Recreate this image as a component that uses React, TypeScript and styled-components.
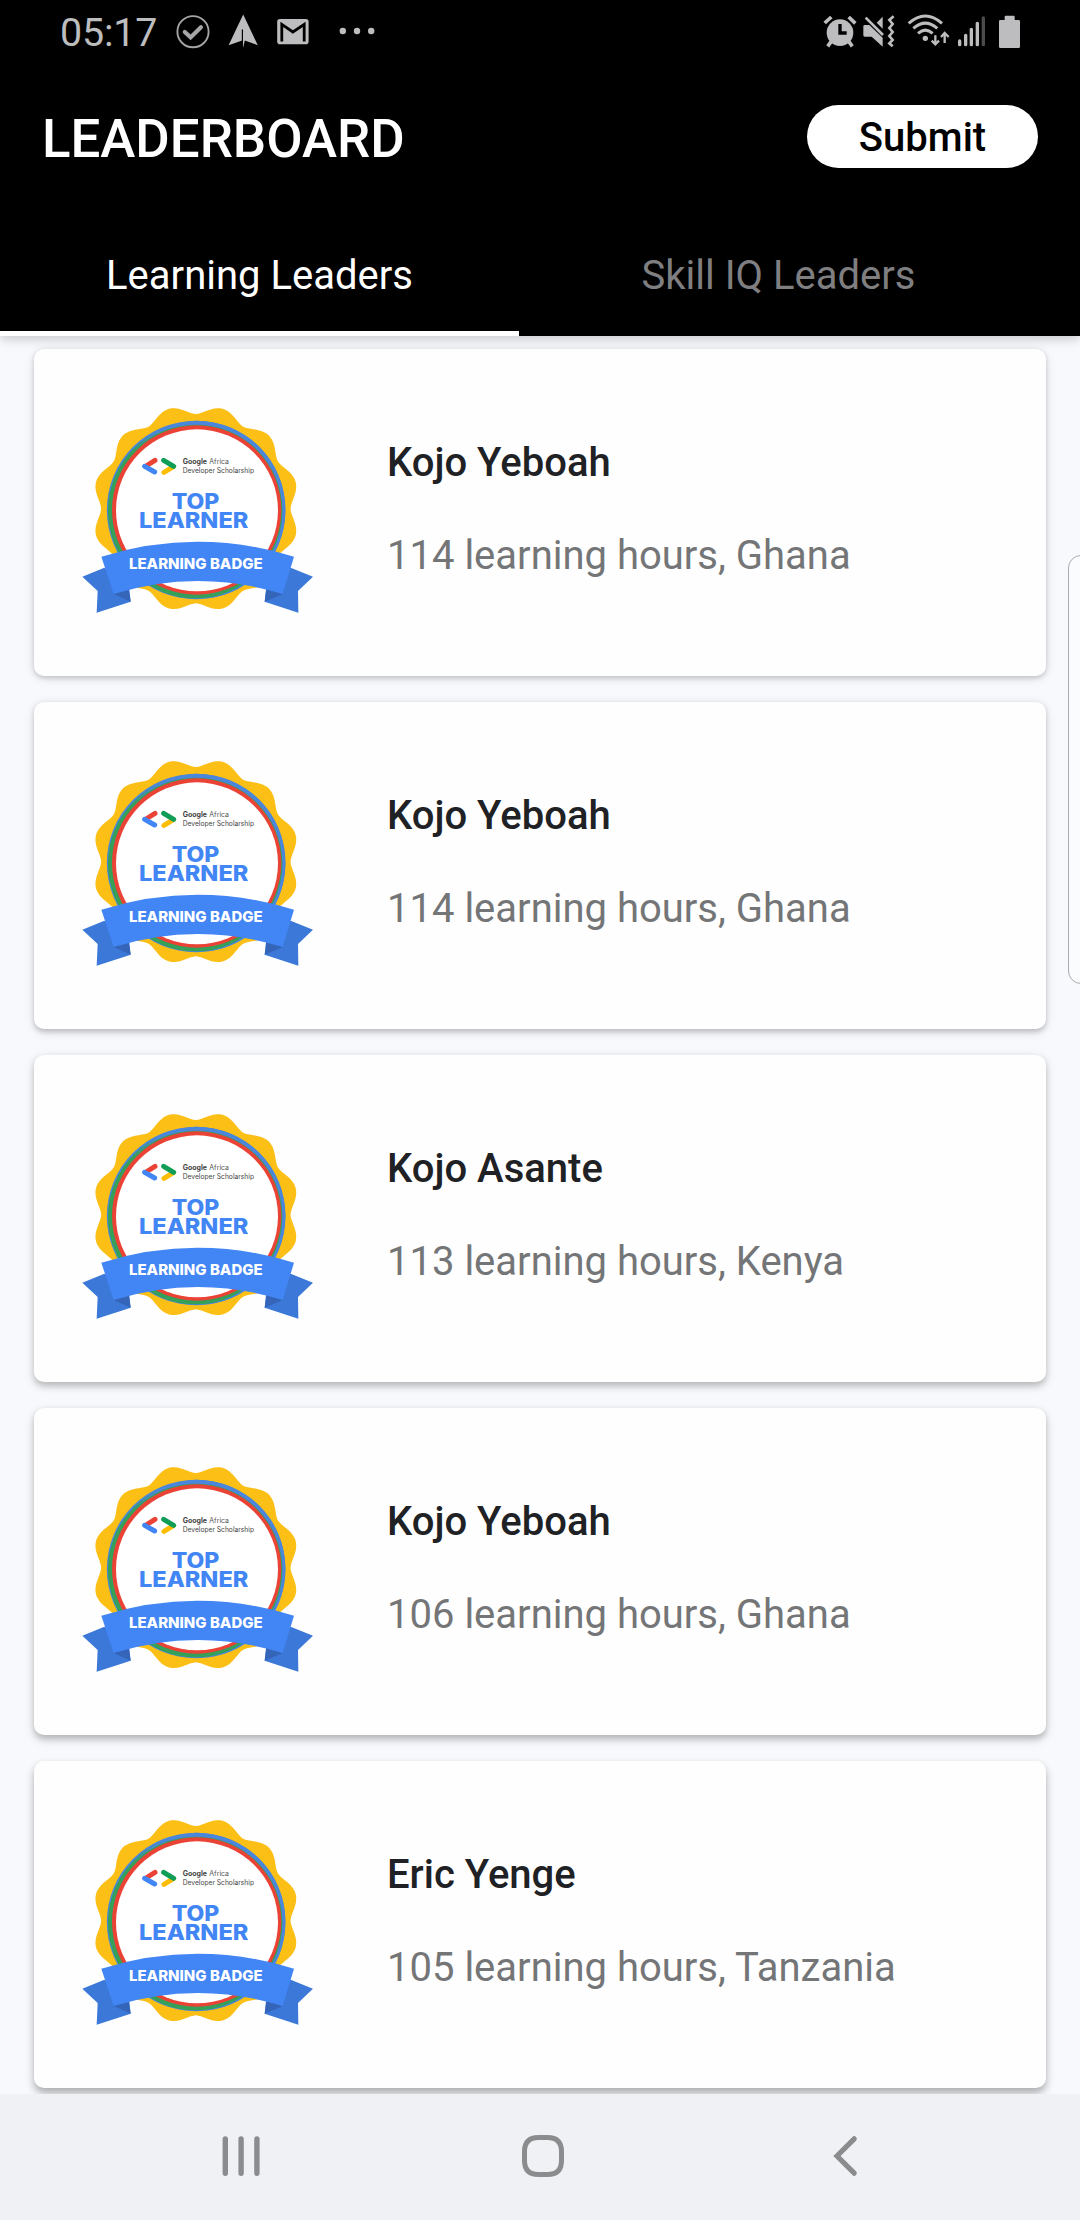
import React from "react";
import styled, { createGlobalStyle } from "styled-components";

const GlobalStyle = createGlobalStyle`
  * { box-sizing: border-box; }
  html, body { margin: 0; padding: 0; background: #f8f9fc; }
  body { font-family: Roboto, "Noto Sans", sans-serif; }
`;

const Screen = styled.div`
  position: relative;
  width: 1080px;
  height: 2220px;
  display: flex;
  flex-direction: column;
  overflow: hidden;
  background: #f8f9fc;
`;

const Header = styled.header`
  flex: none;
  height: 336px;
  background: #000;
  box-shadow: 0 3px 10px rgba(0, 0, 0, 0.16), 0 4px 12px rgba(0, 0, 0, 0.04);
`;

const StatusBar = styled.div`
  height: 63px;
  display: flex;
  justify-content: space-between;
  padding: 0 57px 0 60px;
`;

const StatusGroup = styled.div`
  display: flex;
  align-items: flex-start;
  height: 63px;
`;

const Clock = styled.span`
  width: 115px;
  padding-top: 10px;
  font-size: 39.4px;
  line-height: 46px;
  letter-spacing: -0.2px;
  color: #bdbdbf;
`;

const StatusSvg = styled.svg<{ $gap?: number }>`
  display: block;
  flex: none;
  margin-left: ${(p) => p.$gap ?? 0}px;
`;

const AppBar = styled.div`
  height: 147px;
  display: flex;
  align-items: center;
  justify-content: space-between;
  padding: 0 42px;
`;

const Title = styled.h1`
  margin: 5px 0 0;
  font-size: 52.8px;
  line-height: 62px;
  font-weight: 500;
  color: #fff;
`;

const SubmitButton = styled.button`
  width: 231px;
  height: 63px;
  padding: 3px 0 0;
  border: 0;
  border-radius: 32px;
  background: #fff;
  color: #000;
  font-family: inherit;
  font-size: 40px;
  line-height: 46px;
  font-weight: 500;
`;

const Tabs = styled.nav`
  height: 126px;
  display: flex;
`;

const Tab = styled.div<{ $active?: boolean }>`
  width: 519px;
  display: flex;
  align-items: center;
  justify-content: center;
  padding-top: ${(p) => (p.$active ? 10 : 5)}px;
  border-bottom: ${(p) => (p.$active ? "5px solid #fff" : "0")};
  font-size: 40px;
  line-height: 46px;
  color: ${(p) => (p.$active ? "#fff" : "#7f7f81")};
`;

const List = styled.main`
  flex: 1;
  min-height: 0;
  display: flex;
  flex-direction: column;
  gap: 26px;
  padding: 13px 34px 0;
`;

/* Elevation shadows grow stronger for cards lower on the screen. */
const Card = styled.article<{ $depth: number }>`
  flex: none;
  height: 327px;
  display: flex;
  align-items: flex-start;
  padding: 41px 36px;
  border-radius: 10px;
  background: #fefefe;
  box-shadow:
    0 ${(p) => 2 + p.$depth * 0.6}px ${(p) => 5 + p.$depth * 0.5}px rgba(0, 0, 0, ${(p) => 0.17 + p.$depth * 0.012}),
    0 ${(p) => 2 + p.$depth * 0.8}px 12px rgba(0, 0, 0, 0.1);
`;

const CardText = styled.div`
  margin-left: 57px;
  padding-top: 50px;
  display: flex;
  flex-direction: column;
  gap: 47px;
`;

const Name = styled.h2`
  margin: 0;
  font-size: 40px;
  line-height: 46px;
  font-weight: 500;
  color: #202124;
`;

const Details = styled.p`
  margin: 0;
  font-size: 40px;
  line-height: 46px;
  color: #747577;
`;

const EdgeHandle = styled.div`
  position: absolute;
  top: 555px;
  right: -14px;
  width: 26px;
  height: 429px;
  border: 1px solid #aaabad;
  border-radius: 14px;
  background: #fbfcfd;
`;

const NavBar = styled.footer`
  position: relative;
  flex: none;
  height: 126px;
  display: flex;
  align-items: center;
  padding: 0 210px;
  justify-content: space-between;
  background: #f0f1f4;
`;

const GREY = "#bdbdbf";

function LeftIcons() {
  return (
    <>
      <StatusSvg width="36" height="63" viewBox="175 0 36 63" fill="none">
        <circle cx="193" cy="31.7" r="15.6" stroke="#a5a5a7" strokeWidth="1.9" />
        <path d="M184.8 32l5.8 5.4 10.3-10.2" stroke="#a5a5a7" strokeWidth="4.2" strokeLinecap="round" />
      </StatusSvg>
      <StatusSvg $gap={16} width="34" height="63" viewBox="227 0 34 63" fill={GREY}>
        <path d="M243.2 14.5L257.8 45.2 244.8 40.4 243.2 47.4 242.2 40.4 228.6 45.2z" />
        <path d="M242.4 29.5V45" stroke="#000" strokeWidth="1.2" />
      </StatusSvg>
      <StatusSvg $gap={15} width="34" height="63" viewBox="276 0 34 63">
        <rect x="277.2" y="19" width="31.4" height="25.2" rx="2.8" fill={GREY} />
        <path d="M281.8 41.4V24.4L292.9 32 304.2 24.4V41.4" fill="none" stroke="#000" strokeWidth="2.8" />
      </StatusSvg>
      <StatusSvg $gap={29} width="38" height="63" viewBox="339 0 38 63" fill={GREY}>
        <circle cx="342.8" cy="31" r="3.2" />
        <circle cx="357" cy="31" r="3.2" />
        <circle cx="371.2" cy="31" r="3.2" />
      </StatusSvg>
    </>
  );
}

function RightIcons() {
  return (
    <>
      <StatusSvg width="35" height="63" viewBox="129 0 105 189" fill="none" stroke={GREY}>
        <circle cx="180" cy="98" r="40" fill={GREY} stroke="none" />
        <path d="M134 69L154 51M206 51L226 70" strokeWidth="11" />
        <path d="M154 124L143 139M206 124L217 139" strokeWidth="11" />
        <path d="M180 72V99H200" stroke="#000" strokeWidth="10" />
      </StatusSvg>
      <StatusSvg $gap={5} width="33" height="63" viewBox="249 0 99 189">
        <path d="M250 79q0-4 4-4H268L308 113V140L275 110H254q-4 0-4-4z" fill={GREY} />
        <path d="M290 68L308 50V86z" fill={GREY} />
        <path d="M257 53L309 105" stroke={GREY} strokeWidth="8" />
        <path d="M341 49L328 60 338 72 328 84 338 96 328 108 338 120 328 130 338 139" fill="none" stroke={GREY} strokeWidth="8" />
      </StatusSvg>
      <StatusSvg $gap={10} width="44" height="63" viewBox="378 0 132 189" fill="none" stroke={GREY} strokeWidth="9">
        <path d="M386 70Q436 26 486 70" />
        <path d="M400 85Q436 54 472 85" />
        <path d="M414 100Q436 81 458 100" />
        <circle cx="436" cy="115" r="8" fill={GREY} stroke="none" />
        <path d="M466 106V134M455 122L466 133 477 122" strokeWidth="7" />
        <path d="M494 129V99M483 111L494 99 506 111" strokeWidth="7" />
      </StatusSvg>
      <StatusSvg $gap={7} width="30" height="63" viewBox="531 0 90 189" stroke={GREY} strokeWidth="10" strokeLinecap="round">
        <path d="M539 123V134M557 106V134M574 88V134M592 70V134" />
        <path d="M610 54V134" stroke="#4b4b4c" />
      </StatusSvg>
      <StatusSvg $gap={12} width="24" height="63" viewBox="657 0 72 189" fill={GREY}>
        <path d="M674 60V50q0-3 3-3H701q3 0 3 3V60H716q4 0 4 4V140q0 4-4 4H661q-4 0-4-4V64q0-4 4-4z" />
      </StatusSvg>
    </>
  );
}

/* Outline of the gold seal: twelve soft, broad lobes around the centre. */
const sealPoints: string[] = [];
for (let i = 0; i < 360; i += 1.5) {
  const a = (i * Math.PI) / 180;
  const wave = (1 - Math.cos(12 * a)) / 2;
  const r = 284 + 26 * Math.pow(wave, 0.85);
  sealPoints.push(`${(377.5 + r * Math.sin(a)).toFixed(1)} ${(356 - r * Math.cos(a)).toFixed(1)}`);
}
const sealPath = `M${sealPoints.join("L")}Z`;

const BadgeSvg = styled.svg`
  display: block;
  flex: none;
  font-family: Inter, "Open Sans", sans-serif;
`;

function Badge() {
  return (
    <BadgeSvg width="260" height="240" viewBox="0 0 780 720">
      <path d={sealPath} fill="#fbbf16" />
      <circle cx="378.5" cy="360" r="268" fill="#4a86dc" />
      <circle cx="377" cy="362" r="263" fill="#34a058" />
      <path d="M378 92A268 268 0 0 1 646 360A268 268 0 0 1 378 628A266 266 0 0 0 637 360A258 258 0 0 0 378 104A258 258 0 0 0 190 184A266 266 0 0 1 378 92Z" fill="#4a86dc" />
      <circle cx="380" cy="360" r="254" fill="#ea4335" />
      <circle cx="381" cy="361" r="243" fill="#fff" />
      <g fill="none" strokeWidth="15" strokeLinecap="round">
        <path d="M228 228L255 211" stroke="#ea4335" />
        <path d="M310 230L282 247" stroke="#fbbc04" />
        <path d="M224 229L254 246" stroke="#4285f4" />
        <path d="M281 211L311 229" stroke="#109d58" />
      </g>
      <text x="338" y="222" fontSize="21" fontWeight="700" fill="#444" textLength="73" lengthAdjust="spacingAndGlyphs">Google</text>
      <text x="418" y="222" fontSize="21" fill="#555" textLength="59" lengthAdjust="spacingAndGlyphs">Africa</text>
      <text x="338" y="248" fontSize="21" fill="#444" textLength="214" lengthAdjust="spacingAndGlyphs">Developer Scholarship</text>
      <g fill="#4285f4" fontSize="64" fontWeight="800">
        <text x="305" y="356" textLength="143" lengthAdjust="spacingAndGlyphs">TOP</text>
        <text x="207" y="415" textLength="328" lengthAdjust="spacingAndGlyphs">LEARNER</text>
      </g>
      <path d="M103 533L37 560 83 603 80 668 182 635 176 580zM662 533L729 560 684 603 685 668 584 635 590 580z" fill="#3b78d8" />
      <path d="M131 612L182 635 175 590zM638 612L584 635 590 590z" fill="#3465b8" />
      <path d="M94 500Q238 455 383 455 528 455 672 500L638 612Q511 573 384 573 257 573 131 612Z" fill="#4285f4" />
      <text x="177" y="536" fontSize="45" fontWeight="800" fill="#fff" textLength="401" lengthAdjust="spacingAndGlyphs">LEARNING BADGE</text>
    </BadgeSvg>
  );
}

const leaders = [
  { name: "Kojo Yeboah", hours: 114, country: "Ghana" },
  { name: "Kojo Yeboah", hours: 114, country: "Ghana" },
  { name: "Kojo Asante", hours: 113, country: "Kenya" },
  { name: "Kojo Yeboah", hours: 106, country: "Ghana" },
  { name: "Eric Yenge", hours: 105, country: "Tanzania" },
];

export default function App() {
  return (
    <>
      <GlobalStyle />
      <Screen>
        <Header>
          <StatusBar>
            <StatusGroup>
              <Clock>05:17</Clock>
              <LeftIcons />
            </StatusGroup>
            <StatusGroup>
              <RightIcons />
            </StatusGroup>
          </StatusBar>
          <AppBar>
            <Title>LEADERBOARD</Title>
            <SubmitButton>Submit</SubmitButton>
          </AppBar>
          <Tabs>
            <Tab $active>Learning Leaders</Tab>
            <Tab>Skill IQ Leaders</Tab>
          </Tabs>
        </Header>
        <List>
          {leaders.map((leader, i) => (
            <Card key={i} $depth={i}>
              <Badge />
              <CardText>
                <Name>{leader.name}</Name>
                <Details>
                  {leader.hours} learning hours, {leader.country}
                </Details>
              </CardText>
            </Card>
          ))}
        </List>
        <NavBar>
          <svg width="62" height="60" viewBox="210 2127 62 60" fill="none" stroke="#8b8c8e" strokeWidth="5.4" strokeLinecap="round">
            <path d="M225.3 2139V2173.2M241.1 2139V2173.2M256.9 2139V2173.2" />
          </svg>
          <svg width="60" height="60" viewBox="511 2127 60 60" fill="none" stroke="#8b8c8e" strokeWidth="5">
            <path d="M538.5 2137.5H547.5Q561.5 2137.5 561.5 2151.5V2160.5Q561.5 2174.5 547.5 2174.5H538.5Q524.5 2174.5 524.5 2160.5V2151.5Q524.5 2137.5 538.5 2137.5Z" />
          </svg>
          <svg width="60" height="60" viewBox="810 2127 60 60" fill="none" stroke="#8b8c8e" strokeWidth="5.2" strokeLinecap="round">
            <path d="M854.2 2138.8L837 2156 854.2 2173.2" />
          </svg>
        </NavBar>
        <EdgeHandle />
      </Screen>
    </>
  );
}
